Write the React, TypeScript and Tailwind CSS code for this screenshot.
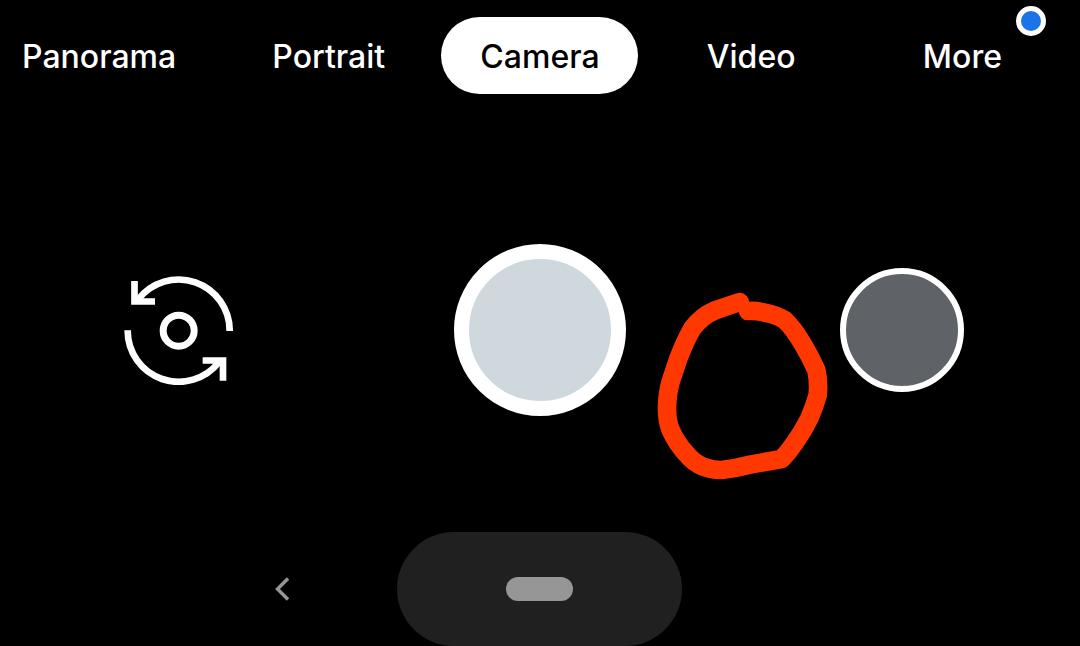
import { useState } from "react";
import clsx from "clsx";

const modes = ["Panorama", "Portrait", "Camera", "Video", "More"];

function FlipCameraIcon() {
  return (
    <svg viewBox="38 44 330 330" className="size-[110px]" fill="none" stroke="white" strokeWidth="20" aria-hidden="true">
      <path d="M358 212A153 153 0 0 0 84 117" />
      <path d="M72.5 62V123.500H134" />
      <path d="M52 210A153 153 0 0 0 326 305" />
      <path d="M338 361V300.500H277" />
      <circle cx="205" cy="211" r="46.500" strokeWidth="21" />
    </svg>
  );
}

function Scribble() {
  return (
    <svg
      viewBox="0 0 600 630"
      className="pointer-events-none absolute left-1/2 top-[280px] ml-[100px] h-[210px] w-[200px]"
      fill="none"
      stroke="#ff3700"
      strokeWidth="56"
      strokeLinecap="round"
      strokeLinejoin="round"
      aria-hidden="true"
    >
      <path d="M299 66L225 91Q185 108 157 145Q136 181 115 236L92 305Q82 340 81 384Q81 425 92 450Q108 486 135 517Q160 549 190 560Q218 571 245 570Q290 565 335 553L425 537Q447 515 463 490Q488 455 508 415Q524 378 533 345Q537 306 529 270Q511 230 490 195Q461 145 434 120Q408 104 370 97Q347 91 324 93" />
    </svg>
  );
}

export default function App() {
  const [active, setActive] = useState("Camera");

  return (
    <div className="relative flex min-h-screen flex-col overflow-hidden bg-black font-['Inter',sans-serif] text-white">
      <header className="relative h-32 px-3 pt-[17px]">
        <nav className="grid grid-cols-5" aria-label="Capture mode">
          {modes.map((mode, i) => (
            <button
              key={mode}
              type="button"
              aria-pressed={active === mode}
              onClick={() => setActive(mode)}
              className={clsx(
                "flex h-[77px] items-center whitespace-nowrap rounded-full pt-[2px] text-[32px] font-medium leading-10",
                i === 0 ? "justify-self-start px-[10px]" : "w-[197px] justify-center justify-self-center",
                active === mode && "bg-white text-black",
              )}
            >
              {mode}
            </button>
          ))}
        </nav>
        <span className="absolute right-[34px] top-[6px] size-[30px] rounded-full border-5 border-white bg-[#1a73e8]" />
      </header>

      <main className="flex flex-1 items-center justify-between px-[116px]">
        <button type="button" aria-label="Switch camera" className="flex size-[124px] items-center justify-center">
          <FlipCameraIcon />
        </button>
        <button type="button" aria-label="Take photo" className="size-[172px] rounded-full border-15 border-white bg-[#cfd8dd]" />
        <button type="button" aria-label="Open gallery" className="size-[124px] rounded-full border-6 border-white bg-[#5f6368]" />
      </main>

      <footer className="grid grid-cols-[1fr_auto_1fr] items-center pr-[2px]">
        <button type="button" aria-label="Back" className="mr-[91px] flex size-12 items-center justify-center justify-self-end">
          <svg viewBox="0 0 14 24" className="h-6 w-[14px]" fill="none" stroke="#969696" strokeWidth="3.400" aria-hidden="true">
            <path d="M13 1.500L2.500 12L13 22.500" />
          </svg>
        </button>
        <button type="button" aria-label="Home" className="flex h-[114px] w-[285px] items-center justify-center rounded-full bg-[#202020]">
          <span className="h-6 w-[67px] rounded-full bg-[#969696]" />
        </button>
      </footer>

      <Scribble />
    </div>
  );
}
